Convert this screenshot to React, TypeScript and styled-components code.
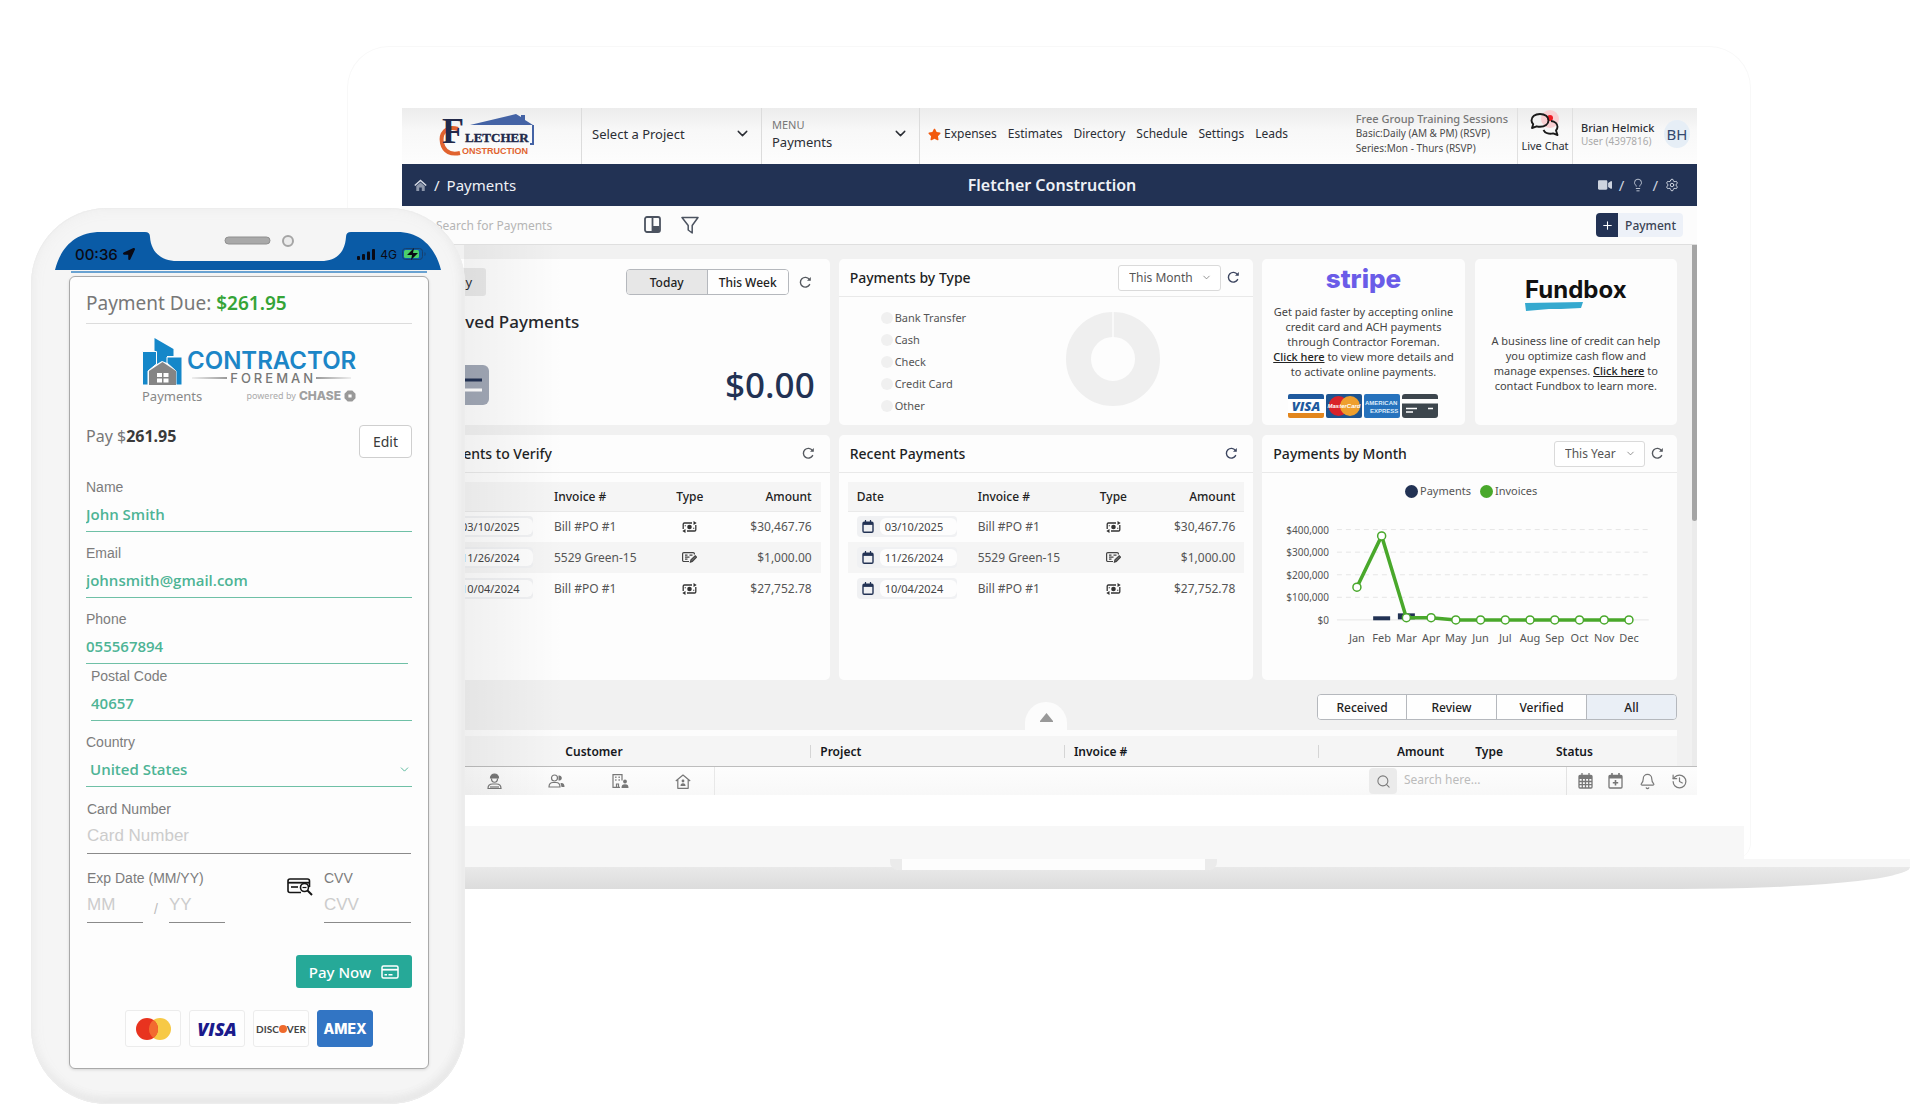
import React from 'react';
import styled, { createGlobalStyle, css } from 'styled-components';
import { ChevronDown, Plus, Search, Bell, History, Settings, Lightbulb } from 'lucide-react';
import { FaLocationArrow, FaStar, FaVideo } from 'react-icons/fa';

const sans = `'Noto Sans', 'Open Sans', sans-serif`;
const arial = `'Liberation Sans', Arial, sans-serif`;
const navy = '#223254';
const ink = '#2b2e35';
const green = '#4db495';

const GlobalStyle = createGlobalStyle`
  *, *::before, *::after { box-sizing: border-box; }
  body { margin: 0; background: #fff; font-family: ${sans}; font-size: 12px; color: ${ink}; overflow-x: hidden; }
  button, input, select { font: inherit; color: inherit; margin: 0; }
  button { cursor: pointer; }
  svg { display: block; flex: none; }
  p, h1, h2, h3 { margin: 0; font-weight: inherit; font-size: inherit; }
  a { color: inherit; text-decoration: none; }
`;

/* ---------- stage and devices ---------- */

const Stage = styled.main`
  display: grid;
  grid-template-columns: 31px 434px minmax(0, 1fr) 10px;
  align-items: start;
`;

const Laptop = styled.section`
  grid-column: 1 / 4;
  grid-row: 1;
  padding: 46px 0 0 347px;
`;

const Lid = styled.div`
  margin-right: 159px;
  padding-top: 61px;
  border: 1px solid #f8f8f8;
  border-bottom: 0;
  border-radius: 42px 42px 16px 16px;
`;

const Screen = styled.div`
  position: relative;
  margin: 0 53px 31px 54px;
  background: #fcfcfc;
  &::after {
    content: '';
    position: absolute;
    inset: 137px auto 0 62px;
    width: 100px;
    pointer-events: none;
    background: linear-gradient(90deg, rgba(0, 0, 0, 0.05), rgba(0, 0, 0, 0));
  }
`;

const Chin = styled.div`
  height: 33px;
  margin-right: 6px;
  background: #f7f7f7;
`;

const Base = styled.div`
  height: 30px;
  padding-left: 543px;
  border-radius: 0 0 230px 30px / 0 0 22px 22px;
  background: linear-gradient(#f7f7f7 0 8px, #e9e9e9 8px, #dcdcdc 100%);
`;

const Notch = styled.div`
  width: 327px;
  height: 11px;
  border-radius: 0 0 8px 8px;
  border: solid #ebebeb;
  border-width: 0 12px;
  background: #fdfdfd;
`;

const Phone = styled.section`
  grid-column: 2;
  grid-row: 1;
  z-index: 1;
  margin-top: 208px;
  padding: 24px 24px 35px;
  border-radius: 76px;
  background: #f5f5f5;
  box-shadow: inset 0 0 0 1px #ededed, inset 0 0 14px 2px #efefef, inset -2px -5px 8px #dedede;
`;

/* ---------- top of the desktop app ---------- */

const TopBar = styled.header`
  display: flex;
  height: 56px;
  background: linear-gradient(#ececec, #f8f8f8 40%, #fdfdfd);
`;

const LogoCell = styled.div`
  flex: 0 0 179px;
  display: flex;
  align-items: center;
  padding: 0 0 2px 36px;
`;

const PickCell = styled.button<{ $w: number }>`
  flex: 0 0 ${(p) => p.$w}px;
  display: flex;
  align-items: center;
  justify-content: space-between;
  padding: 0 10px 5px;
  border: 0;
  border-left: 1px solid #dcdcdc;
  background: none;
  text-align: left;
  font-size: 13px;
  line-height: 18px;
`;

const Overline = styled.small`
  display: block;
  font-size: 11px;
  line-height: 16px;
  color: #777;
`;

const Nav = styled.nav`
  flex: 1;
  display: flex;
  align-items: center;
  gap: 11px;
  padding: 0 0 4px 8px;
  border-left: 1px solid #dcdcdc;
  line-height: 18px;
`;

const Starred = styled.span`
  display: flex;
  align-items: center;
  gap: 3px;
`;

const Training = styled.div`
  padding: 3px 9px 0 0;
  font-size: 10px;
  line-height: 15px;
  color: #4a4a4a;
  b { display: block; font-size: 11px; font-weight: 500; color: #777; }
`;

const ChatCell = styled.button`
  flex: 0 0 56px;
  display: flex;
  flex-direction: column;
  align-items: center;
  justify-content: flex-start;
  padding: 2px 0 0;
  border: solid #e0e0e0;
  border-width: 0 1px;
  background: none;
  font-size: 11px;
  line-height: 13px;
  white-space: nowrap;
`;

const UserCell = styled.div`
  flex: 0 0 124px;
  display: flex;
  align-items: center;
  justify-content: space-between;
  padding: 0 7px 4px 8px;
  font-size: 11px;
  line-height: 14px;
  font-weight: 500;
  white-space: nowrap;
  small { display: block; font-size: 10px; line-height: 13px; font-weight: 400; color: #aaa; }
`;

const Avatar = styled.span`
  display: grid;
  place-items: center;
  width: 26px;
  height: 28px;
  border-radius: 50%;
  background: #e6eef6;
  color: #34486e;
  font-size: 15px;
  font-weight: 400;
`;

const TitleBar = styled.div`
  display: grid;
  grid-template-columns: 1fr auto 1fr;
  align-items: center;
  height: 42px;
  padding: 0 7px 0 12px;
  background: ${navy};
  color: #eef1f6;
  font-size: 15px;
  h1 { font-size: 16px; font-weight: 600; }
`;

const Crumbs = styled.div`
  display: flex;
  align-items: center;
  gap: 7px;
`;

const TitleTools = styled.div`
  display: flex;
  justify-content: flex-end;
  align-items: center;
  gap: 7px;
  padding-right: 11px;
  color: #cdd3df;
`;

const Toolbar = styled.div`
  display: flex;
  align-items: center;
  height: 39px;
  padding: 0 14px 0 34px;
  border-bottom: 1px solid #dfdfdf;
  background: #fcfcfc;
  color: #4c5360;
`;

const ToolSearch = styled.input`
  width: 208px;
  padding: 0;
  border: 0;
  outline: 0;
  background: none;
  font-size: 12px;
  &::placeholder { color: #b5b5b5; opacity: 1; }
`;

const ToolIcons = styled.div`
  display: flex;
  flex: 1;
  gap: 20px;
`;

const AddButton = styled.button`
  display: flex;
  align-items: center;
  height: 24px;
  padding: 0 7px 0 0;
  gap: 7px;
  border: 0;
  border-radius: 4px;
  overflow: hidden;
  background: #edf1f8;
  color: #3a4254;
  font-weight: 500;
  font-size: 12px;
`;

const AddMark = styled.span`
  display: grid;
  place-items: center;
  width: 22px;
  height: 24px;
  background: ${navy};
  color: #fff;
`;

/* ---------- dashboard ---------- */

const Scroller = styled.div`
  display: flex;
  justify-content: space-between;
  background: #f1f1f1;
`;

const Dashboard = styled.div`
  flex: 1;
  min-width: 0;
  padding: 14px 15px 0 13px;
`;

const ScrollTrack = styled.div`
  width: 5px;
  background: #ebebeb;
`;

const ScrollThumb = styled.div`
  height: 276px;
  border-radius: 0 0 3px 3px;
  background: #a5a5a5;
`;

const Cards = styled.div`
  display: grid;
  grid-template-columns: repeat(3, minmax(0, 1fr));
  grid-template-rows: 166px 245px;
  gap: 10px 9px;
`;

const Card = styled.article`
  border-radius: 5px;
  background: #fdfdfd;
`;

const CardHead = styled.header<{ $right?: number }>`
  display: flex;
  align-items: center;
  gap: 6px;
  height: 38px;
  padding: 0 ${(p) => p.$right ?? 13}px 0 11px;
  border-bottom: 1px solid #e9e9e9;
  h2 { flex: 1; font-size: 14px; font-weight: 500; color: #1d1f24; white-space: nowrap; }
`;

const PickWrap = styled.label`
  display: grid;
  align-items: center;
  svg { grid-area: 1 / 1; justify-self: end; margin-right: 9px; pointer-events: none; color: #777; }
`;

const Pick = styled.select<{ $w: number }>`
  grid-area: 1 / 1;
  width: ${(p) => p.$w}px;
  height: 26px;
  padding: 0 10px;
  appearance: none;
  border: 1px solid #dadada;
  border-radius: 3px;
  background: #fff;
  color: #555;
  font-size: 12px;
`;

const IconButton = styled.button`
  display: grid;
  place-items: center;
  padding: 0;
  border: 0;
  background: none;
`;

const Received = styled(Card)`
  display: flex;
  flex-direction: column;
  padding: 9px 15px 0 7px;
  h2 { margin-top: 14px; font-size: 17px; line-height: 24px; font-weight: 500; color: #25272c; }
`;

const Spread = styled.div`
  display: flex;
  align-items: center;
  justify-content: space-between;
`;

const RangeRow = styled.div`
  display: flex;
  align-items: center;
  gap: 10px;
  padding-right: 3px;
`;

const Tag = styled.span`
  padding: 0 14px;
  border-radius: 3px;
  background: #e9e9e9;
  font-size: 13px;
  line-height: 28px;
`;

const Segments = styled.div`
  display: flex;
  border: 1px solid #b5b8bd;
  border-radius: 4px;
  overflow: hidden;
`;

const Segment = styled.button<{ $w: number; $on?: string }>`
  width: ${(p) => p.$w}px;
  height: 24px;
  padding: 0;
  border: 0;
  background: ${(p) => p.$on || '#fefefe'};
  font-size: 12px;
  font-weight: 500;
  color: #222;
  & + & { border-left: 1px solid #b5b8bd; }
`;

const Total = styled.div`
  font-size: 35px;
  line-height: 48px;
  font-weight: 500;
  color: ${navy};
`;

const TotalRow = styled(Spread)`
  margin-top: 27px;
  padding-left: 24px;
`;

const TypeBody = styled.div`
  display: flex;
  align-items: flex-start;
  justify-content: space-between;
  padding: 10px 92px 0 42px;
  svg { margin-top: 4px; }
`;

const TypeList = styled.ul`
  margin: 0;
  padding: 0;
  list-style: none;
  font-size: 11px;
  line-height: 22px;
  color: #555;
`;

const TypeItem = styled.li`
  display: flex;
  align-items: center;
  gap: 2px;
  &::before { content: ''; width: 12px; height: 12px; border-radius: 50%; background: #f0f0f0; }
`;

const Pair = styled.div`
  display: grid;
  grid-template-columns: 1fr 1fr;
  gap: 10px;
`;

const Partner = styled(Card)<{ $top: number }>`
  display: flex;
  flex-direction: column;
  align-items: center;
  padding: ${(p) => p.$top}px 4px 0;
  text-align: center;
  font-size: 11px;
  line-height: 15px;
  color: #444;
  p { white-space: nowrap; }
  a { font-weight: 500; text-decoration: underline; color: #222; }
`;

const StripeMark = styled.div`
  margin-bottom: 9px;
  font-family: Inter, sans-serif;
  font-weight: 800;
  font-size: 26px;
  line-height: 32px;
  color: #6a5ce8;
`;

const FundMark = styled.div`
  margin-bottom: 22px;
  font-family: Inter, sans-serif;
  font-weight: 700;
  font-size: 24px;
  line-height: 24px;
  color: #111;
`;

const Brands = styled.div`
  display: flex;
  gap: 2px;
  margin-top: 15px;
`;

const MiniTable = styled.table`
  width: calc(100% - 18px);
  margin: 9px 9px 0;
  border-collapse: collapse;
  table-layout: fixed;
  th, td { padding: 0 9px; text-align: left; }
  th { height: 29px; background: #f5f5f5; border-bottom: 1px solid #eaeaea; font-weight: 500; color: #222; }
  td { height: 31px; color: #555; }
  tbody tr:nth-child(2) { background: #f5f5f5; }
  th:nth-child(1) { width: 30.5%; }
  th:nth-child(2) { width: 26.5%; }
  th:nth-child(3) { width: 20%; text-align: center; }
  th:nth-child(4), td:nth-child(4) { text-align: right; }
  td:nth-child(3) svg { margin: 0 auto; }
`;

const DateChip = styled.span`
  display: flex;
  align-items: center;
  gap: 6px;
  width: 100px;
  height: 21px;
  padding-left: 5px;
  border-radius: 4px;
  background: #f0f1f3;
  font-size: 11px;
  color: #444;
  time { flex: 1; padding-left: 5px; line-height: 17px; border-radius: 6px; background: #fdfdfd; }
`;

const Legend = styled.div`
  display: flex;
  justify-content: center;
  gap: 9px;
  padding: 9px 0 0 3px;
  font-size: 11px;
  line-height: 18px;
  color: #555;
`;

const Key = styled.span<{ $c: string }>`
  display: flex;
  align-items: center;
  gap: 2px;
  &::before { content: ''; width: 13px; height: 13px; border-radius: 50%; background: ${(p) => p.$c}; }
`;

/* ---------- list under the dashboard ---------- */

const ListTools = styled.div`
  display: grid;
  grid-template-columns: 1fr auto 1fr;
  align-items: end;
  height: 50px;
  ${Segments} { grid-column: 3; justify-self: end; align-self: center; margin-top: 4px; }
`;

const Collapse = styled.button`
  grid-column: 2;
  display: grid;
  place-items: center;
  width: 42px;
  height: 28px;
  padding: 2px 0 0;
  border: 0;
  border-radius: 21px 21px 0 0;
  background: #fcfcfc;
`;

const ListTable = styled.table`
  width: 100%;
  border-top: 6px solid #fcfcfc;
  border-collapse: collapse;
  table-layout: fixed;
  background: #f5f5f5;
  th { height: 33px; padding: 0 9px; font-size: 12px; font-weight: 600; color: #16181c; }
`;

const Th = styled.th<{ $w: number; $line?: boolean; $end?: boolean }>`
  width: ${(p) => p.$w}%;
  text-align: left;
  ${(p) => p.$line && css`background: linear-gradient(#d5d5d5, #d5d5d5) right center / 1px 13px no-repeat;`}
  ${(p) => p.$end && css`&& { text-align: right; padding-right: 22px; }`}
`;

const Dock = styled.footer`
  display: flex;
  height: 29px;
  border-top: 1px solid #bdbdbd;
  background: linear-gradient(#fdfdfd, #f8f8f8);
  color: #7a7a7a;
`;

const DockLeft = styled.div`
  display: flex;
  align-items: center;
  justify-content: space-between;
  width: 313px;
  padding: 0 23px 0 85px;
  border-right: 1px solid #e8e8e8;
`;

const DockSearch = styled.label`
  display: flex;
  align-items: center;
  width: 197px;
  margin-left: auto;
  input { width: 150px; padding: 0 0 3px 7px; border: 0; outline: 0; background: none; font-size: 12px; }
  input::placeholder { color: #bbb; opacity: 1; }
`;

const DockMark = styled.span`
  display: grid;
  place-items: center;
  width: 28px;
  height: 26px;
  border-radius: 4px;
  background: #ebebeb;
`;

const DockRight = styled.div`
  display: flex;
  align-items: center;
  justify-content: space-between;
  width: 131px;
  padding: 0 9px 0 11px;
  border-left: 1px solid #e3e3e3;
`;

/* ---------- phone ---------- */

const StatusBar = styled.div`
  position: relative;
  display: flex;
  align-items: center;
  height: 38px;
  padding: 6px 14px 0 20px;
  font-family: Inter, sans-serif;
  font-size: 15px;
  font-weight: 500;
  color: #0a0a14;
`;

const StatusShape = styled.svg`
  position: absolute;
  inset: 0;
  width: 100%;
  height: 100%;
  overflow: visible;
`;

const StatusSide = styled.div`
  position: relative;
  display: flex;
  align-items: center;
  gap: 5px;
  small { font-size: 12px; font-weight: 400; }
  &:last-child { margin-left: auto; }
`;

const Sheet = styled.form`
  margin: 6px 12px 0 14px;
  padding: 0 16px 21px;
  border: 1px solid #a9a9a9;
  border-radius: 6px;
  background: #fdfdfd;
  box-shadow: 0 1px 3px rgba(0, 0, 0, 0.12);
`;

const Due = styled.h2`
  height: 47px;
  padding-top: 12px;
  border-bottom: 1px solid #dcdcdc;
  && { font-size: 19px; }
  line-height: 28px;
  color: #777;
  b { font-weight: 600; color: #35a437; }
`;

const BrandBox = styled.div`
  width: 214px;
  margin: 13px auto 0;
`;

const BrandTop = styled.div`
  display: flex;
  align-items: flex-end;
  gap: 4px;
`;

const BrandWord = styled.div`
  font-family: Inter, sans-serif;
  font-weight: 600;
  font-size: 24px;
  line-height: 22px;
  color: #1c86c7;
`;

const BrandSub = styled.div`
  display: flex;
  align-items: center;
  gap: 3px;
  margin-bottom: 2px;
  padding: 0 5px;
  font-family: Inter, sans-serif;
  font-size: 13px;
  line-height: 12px;
  font-weight: 500;
  color: #777;
  &::before, &::after { content: ''; flex: 1; height: 2px; background: linear-gradient(90deg, #eee, #999); }
  &::after { background: linear-gradient(90deg, #999, #eee); }
`;

const BrandFoot = styled(Spread)`
  height: 19px;
  font-size: 13px;
  color: #888;
`;

const Powered = styled.span`
  display: flex;
  align-items: center;
  gap: 3px;
  font-size: 9px;
  color: #aaa;
  b { font-family: Inter, sans-serif; font-weight: 800; font-size: 12px; color: #a0a0a0; }
`;

const PayRow = styled(Spread)`
  margin: 20px 0 20px;
  align-items: flex-start;
  font-size: 16px;
  line-height: 22px;
  color: #777;
  b { font-weight: 700; color: #3a3a3a; }
`;

const EditButton = styled.button`
  width: 53px;
  height: 33px;
  padding: 0;
  border: 1px solid #cfcfcf;
  border-radius: 4px;
  background: #fff;
  font-size: 14px;
  color: #3a3a3a;
`;

const Field = styled.div<{ $gap: number; $pad?: string }>`
  display: grid;
  margin-bottom: ${(p) => p.$gap}px;
  padding: ${(p) => p.$pad || '0'};
`;

const labelText = css`
  font-family: ${arial};
  font-size: 14px;
  line-height: 18px;
  color: #7c7c7c;
`;

const Label = styled.label`${labelText}`;

const control = css`
  width: 100%;
  height: 36px;
  padding: 1px 0 0;
  border: 0;
  border-bottom: 1px solid #6fc0a6;
  border-radius: 0;
  outline: 0;
  background: none;
  font-family: 'Open Sans', 'Noto Sans', sans-serif;
  font-size: 15px;
  font-weight: 600;
  color: ${green};
`;

const TextBox = styled.input`${control}`;

const CountryWrap = styled.div`
  display: grid;
  align-items: center;
  svg { grid-area: 1 / 1; justify-self: end; margin-right: 1px; color: ${green}; pointer-events: none; }
`;

const CountryBox = styled.select`
  ${control}
  grid-area: 1 / 1;
  padding-left: 4px;
  appearance: none;
`;

const CardBox = styled.input`
  ${control}
  border-bottom-color: #8a8a8a;
  font-family: ${arial};
  font-size: 17px;
  font-weight: 400;
  color: #555;
  &::placeholder { color: #ccc; opacity: 1; }
`;

const ExpRow = styled.div`
  display: flex;
  align-items: flex-start;
  gap: 11px;
  padding: 0 1px;
`;

const Expiry = styled.fieldset`
  flex: 1;
  min-width: 0;
  margin: 0;
  padding: 0;
  border: 0;
  legend { padding: 0; ${labelText} }
`;

const ExpParts = styled.div`
  display: grid;
  grid-template-columns: 56px 26px 56px;
  align-items: center;
  text-align: center;
  color: #bbb;
  font-family: ${arial};
  font-size: 14px;
  span { padding-top: 8px; }
`;

const CvvField = styled.div`
  display: grid;
  width: 87px;
`;

const ScanButton = styled(IconButton)`
  margin-top: 9px;
`;

const PayButton = styled.button`
  display: flex;
  align-items: center;
  gap: 10px;
  height: 33px;
  margin: 32px 0 22px auto;
  padding: 0 13px;
  border: 0;
  border-radius: 3px;
  background: #26a998;
  color: #fff;
  font-size: 15px;
  font-weight: 500;
`;

const Accepted = styled.div`
  display: flex;
  justify-content: center;
  gap: 8px;
`;

const Badge = styled.span<{ $bg?: string; $c?: string }>`
  display: flex;
  align-items: center;
  justify-content: center;
  width: 56px;
  height: 37px;
  border: 1px solid ${(p) => p.$bg || '#ececec'};
  border-radius: 3px;
  background: ${(p) => p.$bg || '#fefefe'};
  color: ${(p) => p.$c || '#444'};
  font-family: Inter, sans-serif;
`;

const VisaText = styled.b`
  font-family: 'Open Sans', sans-serif;
  font-size: 18px;
  font-weight: 800;
  font-style: italic;
`;

const DiscoverText = styled.b`
  display: flex;
  align-items: center;
  font-family: Lato, sans-serif;
  font-size: 10px;
  font-weight: 700;
  i { width: 8px; height: 8px; border-radius: 50%; background: #ef6a2c; }
`;

const AmexText = styled.b`
  font-size: 14px;
  font-weight: 800;
`;

/* ---------- drawings ---------- */

const Refresh = ({ color = '#55595f' }: { color?: string }) => (
  <svg width="13" height="13" viewBox="0 0 13 13" fill="none" stroke={color} strokeWidth="1.4" strokeLinecap="round">
    <path d="M10.6 8.6A4.9 4.9 0 1 1 10.3 3.4" />
    <path d="M11.8 1v3.8H8z" fill={color} stroke="none" />
  </svg>
);

const CashIcon = () => (
  <svg width="15" height="12" viewBox="0 0 15 12" fill="none" stroke="#333" strokeWidth="1.3">
    <path d="M1.2 8V3.2A1.2 1.2 0 0 1 2.4 2H10M13.8 4v4.8a1.2 1.2 0 0 1-1.2 1.2H5" />
    <path d="M11.5 0l3.2 2-3.2 2zM3.5 8L.3 10l3.2 2z" fill="#333" stroke="none" />
    <circle cx="7.5" cy="6" r="2.3" fill="#333" stroke="none" />
    <path d="M3.3 4.2v1M11.7 6.8v1" strokeWidth="1.2" />
  </svg>
);

const CheckIcon = () => (
  <svg width="15" height="11" viewBox="0 0 15 11" fill="none" stroke="#444" strokeWidth="1.2">
    <path d="M7 9.5H1.8A1.2 1.2 0 0 1 .6 8.3V1.8A1.2 1.2 0 0 1 1.8 .6h9.4A1.2 1.2 0 0 1 12.4 1.8V2.5" />
    <path d="M3 3.2h2.5M7.5 3.2h3M3 5.2h4.5M3 7.2h2.5" />
    <path d="M8.5 10l.5-2.2 4.2-4 1.3 1.4-4.2 4.2z" fill="#777" />
  </svg>
);

const CalendarIcon = () => (
  <svg width="12" height="13" viewBox="0 0 12 13" fill="none" stroke={navy} strokeWidth="1.4">
    <rect x="1" y="2.2" width="10" height="10" rx="1.2" />
    <path d="M1 3.7h10" strokeWidth="2.4" />
    <path d="M3.5 0v3M8.5 0v3" strokeWidth="1.2" />
  </svg>
);

const FletcherLogo = () => (
  <svg width="100" height="44" viewBox="0 0 100 44">
    <path d="M32 12L78 1l5 3V2h4v5l8 5z" fill="#4463a5" />
    <path d="M95 12v19h-3" fill="none" stroke="#4463a5" strokeWidth="2" />
    <path d="M20 16C8 12 2 21 4 30c2 9 9 12 18 10" fill="none" stroke="#e1632f" strokeWidth="4" />
    <text x="4" y="30" fontFamily="'Liberation Serif', serif" fontWeight="700" fontSize="36" fill="#22294a">F</text>
    <text x="27" y="29" fontFamily="'Liberation Serif', serif" fontWeight="700" fontSize="13" fill="#22294a" stroke="#22294a" strokeWidth=".4">LETCHER</text>
    <text x="24" y="41" fontFamily="'Liberation Sans', sans-serif" fontWeight="700" fontSize="9" fill="#e1632f">ONSTRUCTION</text>
  </svg>
);

const ChatIcon = () => (
  <svg width="36" height="29" viewBox="0 0 36 29" fill="none" stroke="#1a1a1a" strokeWidth="1.9" strokeLinejoin="round">
    <circle cx="23" cy="9" r="9" fill="#f9cfd2" stroke="none" />
    <circle cx="23" cy="8" r="3" fill="#ee1c25" stroke="none" />
    <path d="M13 4c5 0 8.5 2.8 8.5 6.4s-3.5 6.4-8.5 6.4c-1.2 0-2.3-.2-3.3-.5L5 18l1.2-3.8A6 6 0 0 1 4.5 10.4C4.5 6.8 8 4 13 4z" />
    <path d="M24 11c4 .4 6.5 3 6.5 5.8 0 1.5-.6 2.7-1.5 3.7L30.5 25l-4.3-1.6c-4.5 1-8.4-.6-9.7-3.4" />
  </svg>
);

const StripeCards = () => (
  <>
    <svg width="36" height="24" viewBox="0 0 36 24">
      <rect width="36" height="24" rx="2" fill="#fff" />
      <path d="M0 5V2a2 2 0 0 1 2-2h32a2 2 0 0 1 2 2v3z" fill="#1f5a9e" />
      <path d="M0 19h36v3a2 2 0 0 1-2 2H2a2 2 0 0 1-2-2z" fill="#e2861d" />
      <text x="18" y="17" textAnchor="middle" fontFamily="'Open Sans', sans-serif" fontWeight="800" fontStyle="italic" fontSize="13" fill="#1f5a9e">VISA</text>
    </svg>
    <svg width="36" height="24" viewBox="0 0 36 24">
      <rect width="36" height="24" rx="2" fill="#1d5490" />
      <circle cx="12.5" cy="12" r="10" fill="#d9222a" />
      <circle cx="24" cy="12" r="10" fill="#ee9f2d" />
      <text x="18" y="14" textAnchor="middle" fontFamily="'Liberation Sans', sans-serif" fontWeight="700" fontStyle="italic" fontSize="6" fill="#fff">MasterCard</text>
    </svg>
    <svg width="36" height="24" viewBox="0 0 36 24">
      <rect width="36" height="24" rx="2" fill="#2672bd" />
      <text x="1" y="11" fontFamily="'Liberation Sans', sans-serif" fontWeight="700" fontSize="6" fill="#dcebfa">AMERICAN</text>
      <text x="6" y="19" fontFamily="'Liberation Sans', sans-serif" fontWeight="700" fontSize="6" fill="#dcebfa">EXPRESS</text>
    </svg>
    <svg width="36" height="24" viewBox="0 0 36 24">
      <rect width="36" height="24" rx="3" fill="#3d464d" />
      <path d="M0 5h36v4.5H0z" fill="#fdfdfd" />
      <path d="M4 14.5h11M4 18h7M26 14.5h5" stroke="#fff" strokeWidth="1.6" />
    </svg>
  </>
);

const months = ['Jan', 'Feb', 'Mar', 'Apr', 'May', 'Jun', 'Jul', 'Aug', 'Sep', 'Oct', 'Nov', 'Dec'];
const invoices = [145, 372, 10, 10, 0, 0, 0, 0, 0, 0, 0, 0];
const paid = [0, 16, 29, 0, 0, 0, 0, 0, 0, 0, 0, 0];

const MonthChart = () => {
  const x = (i: number) => 95 + i * 24.75;
  const y = (v: number) => 120 - v * 0.226;
  return (
    <svg width="100%" height="150" viewBox="0 0 415 150" preserveAspectRatio="xMidYMin meet" fontFamily={sans} fill="#555">
      {[400, 300, 200, 100, 0].map((v) => (
        <g key={v}>
          <path d={`M75 ${y(v)}H387`} stroke="#e6e6e6" strokeDasharray={v ? '5 4' : undefined} />
          <text x="67" y={y(v) + 4} textAnchor="end" fontSize="10">{v ? `$${v},000` : '$0'}</text>
        </g>
      ))}
      {paid.map((v, i) => v > 0 && <rect key={i} x={x(i) - 8.5} y={y(v)} width="17" height={i === 1 ? 4 : 6} fill={navy} />)}
      <polyline points={invoices.map((v, i) => `${x(i)},${y(v)}`).join(' ')} fill="none" stroke="#49a82b" strokeWidth="3.5" />
      {invoices.map((v, i) => <circle key={i} cx={x(i)} cy={y(v)} r="4" fill="#fff" stroke="#49a82b" strokeWidth="1.5" />)}
      {months.map((m, i) => <text key={m} x={x(i)} y="142" textAnchor="middle" fontSize="11">{m}</text>)}
    </svg>
  );
};

const WorkerIcon = () => (
  <svg width="15" height="17" viewBox="0 0 15 17" fill="none" stroke="#777" strokeWidth="1.2">
    <path d="M3.5 5a4 4 0 0 1 8 0z" fill="#777" />
    <path d="M4.5 5.5c0 5 6 5 6 0M1 15.5c0-3.5 2.5-4.5 4.5-4.5h4c2 0 4.5 1 4.5 4.5z" />
    <path d="M3 14h9" />
  </svg>
);

const PeopleIcon = () => (
  <svg width="17" height="14" viewBox="0 0 17 14" fill="none" stroke="#777" strokeWidth="1.2">
    <circle cx="6.5" cy="4" r="3" />
    <path d="M1 13c0-3 1.5-4.5 4-4.5h3c2.5 0 4 1.5 4 4.5z" />
    <path d="M10.5 1.5a2.6 2.6 0 1 1 0 5M12.5 9h1c2 0 3 1.5 3 4h-3z" fill="#777" stroke="none" />
  </svg>
);

const BuildingIcon = () => (
  <svg width="17" height="14" viewBox="0 0 17 14" fill="none" stroke="#777" strokeWidth="1.2">
    <path d="M8 13.4H1V.6h9v6M4.5 13v-3h2v3" />
    <path d="M3.2 3.2h1.3M6.5 3.2h1.3M3.2 6h1.3M6.5 6h1.3" strokeWidth="1.5" />
    <circle cx="13" cy="7.5" r="1.9" fill="#777" stroke="none" />
    <path d="M9.5 13.9c0-2.6 1-3.7 3.5-3.7s3.5 1.1 3.5 3.7z" fill="#777" stroke="none" />
  </svg>
);

const HomeUserIcon = () => (
  <svg width="16" height="15" viewBox="0 0 16 15" fill="none" stroke="#777" strokeWidth="1.2" strokeLinejoin="round">
    <path d="M.8 7L8 1l7.2 6M2.8 5.5v8.8h10.4V5.5" />
    <circle cx="8" cy="7" r="1.4" fill="#777" stroke="none" />
    <path d="M5.5 12c0-2 .8-2.8 2.5-2.8s2.5.8 2.5 2.8z" fill="#777" stroke="none" />
  </svg>
);

const GridCalendarIcon = () => (
  <svg width="15" height="16" viewBox="0 0 15 16" fill="none" stroke="#777" strokeWidth="1.3">
    <rect x="1" y="2.5" width="13" height="12.5" rx="1" />
    <path d="M1 4.5h13" strokeWidth="3" />
    <path d="M4 0v4M11 0v4M1 8.5h13M1 11.7h13M4.3 5v10M7.5 5v10M10.7 5v10" />
  </svg>
);

const AddCalendarIcon = () => (
  <svg width="15" height="16" viewBox="0 0 15 16" fill="none" stroke="#777" strokeWidth="1.3">
    <rect x="1" y="2.5" width="13" height="12.5" rx="1" />
    <path d="M1 4h13" strokeWidth="3" />
    <path d="M4 0v4M11 0v4M7.5 7v5.5M4.8 9.8h5.4" strokeWidth="1.6" />
  </svg>
);

const BuildingMark = () => (
  <svg width="41" height="49" viewBox="0 0 41 49">
    <path d="M12.5 13V1l19 11v7H25v7l-5-2-5 3z" fill="#1587c9" />
    <path d="M.5 14.5h14V27L6 34v14H.5zM25 20h15v28h-6V34l-9-8z" fill="#1587c9" stroke="#fdfdfd" />
    <path d="M7 48V34l13.5-9L34 34v14z" fill="#858585" />
    <path d="M15 36h5v4h-5zM21.5 36h5v4h-5zM15 41.5h5v4h-5zM21.5 41.5h5v4h-5z" fill="#fff" />
  </svg>
);

const ChaseMark = () => (
  <svg width="12" height="12" viewBox="0 0 12 12">
    <path d="M3.7.5h4.6l3.2 3.2v4.6l-3.2 3.2H3.7L.5 8.3V3.7zM4.4 4.4v3.2h3.2V4.4z" fill="#999" fillRule="evenodd" />
  </svg>
);

/* ---------- data and sections ---------- */

const payments = [
  { date: '03/10/2025', invoice: 'Bill #PO #1', kind: 'cash', amount: '$30,467.76' },
  { date: '11/26/2024', invoice: '5529 Green-15', kind: 'check', amount: '$1,000.00' },
  { date: '10/04/2024', invoice: 'Bill #PO #1', kind: 'cash', amount: '$27,752.78' },
];

const PaymentTable = () => (
  <MiniTable>
    <thead>
      <tr><th>Date</th><th>Invoice #</th><th>Type</th><th>Amount</th></tr>
    </thead>
    <tbody>
      {payments.map((p) => (
        <tr key={p.date}>
          <td><DateChip><CalendarIcon /><time>{p.date}</time></DateChip></td>
          <td>{p.invoice}</td>
          <td>{p.kind === 'cash' ? <CashIcon /> : <CheckIcon />}</td>
          <td>{p.amount}</td>
        </tr>
      ))}
    </tbody>
  </MiniTable>
);

const RefreshButton = ({ color }: { color?: string }) => (
  <IconButton type="button" aria-label="Refresh"><Refresh color={color} /></IconButton>
);

const DesktopHeader = () => (
  <>
    <TopBar>
      <LogoCell><FletcherLogo /></LogoCell>
      <PickCell type="button" $w={180}>Select a Project<ChevronDown size={17} strokeWidth={2} /></PickCell>
      <PickCell type="button" $w={158}><span><Overline>MENU</Overline>Payments</span><ChevronDown size={17} strokeWidth={2} /></PickCell>
      <Nav>
        <Starred><FaStar size={13} color="#f2590d" /><a href="#expenses">Expenses</a></Starred>
        <a href="#estimates">Estimates</a>
        <a href="#directory">Directory</a>
        <a href="#schedule">Schedule</a>
        <a href="#settings">Settings</a>
        <a href="#leads">Leads</a>
      </Nav>
      <Training><b>Free Group Training Sessions</b>Basic:Daily (AM &amp; PM) (RSVP)<br />Series:Mon - Thurs (RSVP)</Training>
      <ChatCell type="button"><ChatIcon />Live Chat</ChatCell>
      <UserCell><span>Brian Helmick<small>User (4397816)</small></span><Avatar>BH</Avatar></UserCell>
    </TopBar>
    <TitleBar>
      <Crumbs>
        <svg width="13" height="12" viewBox="0 0 13 12">
          <path d="M.8 6.5l5.7-5 5.7 5" fill="none" stroke="#d5dae5" strokeWidth="1.6" />
          <path d="M2.3 7L6.5 3.4 10.7 7v5H7.8V8.5H5.2V12H2.3z" fill="#8d97ab" />
        </svg>
        <span>/</span><span>Payments</span>
      </Crumbs>
      <h1>Fletcher Construction</h1>
      <TitleTools><FaVideo size={14} /><span>/</span><Lightbulb size={14} strokeWidth={1.5} /><span>/</span><Settings size={14} strokeWidth={1.7} /></TitleTools>
    </TitleBar>
    <Toolbar>
      <ToolSearch aria-label="Search for Payments" placeholder="Search for Payments" />
      <ToolIcons>
        <svg width="17" height="17" viewBox="0 0 17 17" fill="none" stroke="#4c5360" strokeWidth="1.8">
          <rect x="1" y="1" width="15" height="15" rx="2" />
          <path d="M8.5 1v15" />
          <path d="M8.5 10h7v6h-7z" fill="#4c5360" stroke="none" />
        </svg>
        <svg width="18" height="18" viewBox="0 0 18 18" fill="none" stroke="#4c5360" strokeWidth="1.5" strokeLinejoin="round">
          <path d="M1 1.5h16l-5.8 8V17l-4-3V9.5z" />
        </svg>
      </ToolIcons>
      <AddButton type="button"><AddMark><Plus size={13} strokeWidth={2} /></AddMark>Payment</AddButton>
    </Toolbar>
  </>
);

const DashboardCards = () => (
  <Cards>
    <Received>
      <Spread>
        <Tag>Today</Tag>
        <RangeRow>
          <Segments><Segment type="button" $w={80} $on="#e7e7e7">Today</Segment><Segment type="button" $w={81}>This Week</Segment></Segments>
          <RefreshButton />
        </RangeRow>
      </Spread>
      <h2>Received Payments</h2>
      <TotalRow>
        <svg width="43" height="40" viewBox="0 0 43 40">
          <rect width="43" height="40" rx="6" fill="#a1a8b6" />
          <path d="M8 15h28" stroke={navy} strokeWidth="3" />
          <path d="M8 25h28" stroke="#fff" strokeWidth="3" />
        </svg>
        <Total>$0.00</Total>
      </TotalRow>
    </Received>
    <Card>
      <CardHead>
        <h2>Payments by Type</h2>
        <PickWrap><Pick $w={103} aria-label="Type period" defaultValue="m"><option value="m">This Month</option></Pick><ChevronDown size={11} strokeWidth={1.7} /></PickWrap>
        <RefreshButton color="#3d4660" />
      </CardHead>
      <TypeBody>
        <TypeList>
          {['Bank Transfer', 'Cash', 'Check', 'Credit Card', 'Other'].map((t) => <TypeItem key={t}>{t}</TypeItem>)}
        </TypeList>
        <svg width="96" height="96" viewBox="0 0 96 96">
          <circle cx="48" cy="48" r="34.5" fill="none" stroke="#efefef" strokeWidth="25" />
          <path d="M48 0v27" stroke="#fdfdfd" strokeWidth="1.5" />
        </svg>
      </TypeBody>
    </Card>
    <Pair>
      <Partner $top={4}>
        <StripeMark>stripe</StripeMark>
        <p>Get paid faster by accepting online<br />credit card and ACH payments<br />through Contractor Foreman.<br /><a href="#stripe">Click here</a> to view more details and<br />to activate online payments.</p>
        <Brands><StripeCards /></Brands>
      </Partner>
      <Partner $top={19}>
        <FundMark>Fundbox<svg width="58" height="9" viewBox="0 0 58 9"><path d="M0 1l58-1-2 6-20 1-12 0-23 2z" fill="#35a9cf" /></svg></FundMark>
        <p>A business line of credit can help<br />you optimize cash flow and<br />manage expenses. <a href="#fundbox">Click here</a> to<br />contact Fundbox to learn more.</p>
      </Partner>
    </Pair>
    <Card>
      <CardHead $right={15}><h2>Payments to Verify</h2><RefreshButton /></CardHead>
      <PaymentTable />
    </Card>
    <Card>
      <CardHead $right={15}><h2>Recent Payments</h2><RefreshButton color="#3d4660" /></CardHead>
      <PaymentTable />
    </Card>
    <Card>
      <CardHead>
        <h2>Payments by Month</h2>
        <PickWrap><Pick $w={91} aria-label="Month period" defaultValue="y"><option value="y">This Year</option></Pick><ChevronDown size={11} strokeWidth={1.7} /></PickWrap>
        <RefreshButton />
      </CardHead>
      <Legend><Key $c={navy}>Payments</Key><Key $c="#49a82b">Invoices</Key></Legend>
      <MonthChart />
    </Card>
  </Cards>
);

const Desktop = () => (
  <Screen>
    <DesktopHeader />
    <Scroller>
      <Dashboard>
        <DashboardCards />
        <ListTools>
          <Collapse type="button" aria-label="Collapse">
            <svg width="13" height="9" viewBox="0 0 13 9"><path d="M6.5 0L13 8v1H0V8z" fill="#999" /></svg>
          </Collapse>
          <Segments>
            <Segment type="button" $w={88}>Received</Segment>
            <Segment type="button" $w={90}>Review</Segment>
            <Segment type="button" $w={90}>Verified</Segment>
            <Segment type="button" $w={90} $on="#eaeff6">All</Segment>
          </Segments>
        </ListTools>
        <ListTable>
          <thead>
            <tr>
              <Th $w={11.2} aria-label="Row" />
              <Th $w={20.2} $line>Customer</Th>
              <Th $w={20.1} $line>Project</Th>
              <Th $w={20.1} $line>Invoice #</Th>
              <Th $w={11.7} $end>Amount</Th>
              <Th $w={6.4}>Type</Th>
              <Th $w={10.3}>Status</Th>
            </tr>
          </thead>
        </ListTable>
      </Dashboard>
      <ScrollTrack><ScrollThumb /></ScrollTrack>
    </Scroller>
    <Dock>
      <DockLeft><WorkerIcon /><PeopleIcon /><BuildingIcon /><HomeUserIcon /></DockLeft>
      <DockSearch>
        <DockMark><Search size={15} strokeWidth={1.7} /></DockMark>
        <input aria-label="Search here" placeholder="Search here..." />
      </DockSearch>
      <DockRight><GridCalendarIcon /><AddCalendarIcon /><Bell size={17} strokeWidth={1.7} /><History size={17} strokeWidth={1.7} /></DockRight>
    </Dock>
  </Screen>
);

const Handset = () => (
  <Phone>
    <StatusBar>
      <StatusShape viewBox="0 0 386 38" preserveAspectRatio="none">
        <path d="M0 38C5 18 18 0 46 0H90q5 0 5 5C96 20 106 29 122 29H266C282 29 290 20 291 5q0-5 5-5H342C368 0 381 18 386 38z" fill="#0a5ba6" />
        <path d="M16 40H372" stroke="#3a86c4" strokeWidth="1.5" />
        <rect x="170" y="5" width="45" height="7" rx="3.5" fill="#a9a9a9" stroke="#8f8f8f" />
        <circle cx="233" cy="9" r="5" fill="#ececec" stroke="#a5a5a5" strokeWidth="2" />
      </StatusShape>
      <StatusSide>00:36<FaLocationArrow size={12} /></StatusSide>
      <StatusSide>
        <svg width="18" height="11" viewBox="0 0 18 11" fill="#0a0a14">
          <rect y="7" width="3" height="4" rx="1" /><rect x="5" y="5" width="3" height="6" rx="1" /><rect x="10" y="2.5" width="3" height="8.5" rx="1" /><rect x="15" width="3" height="11" rx="1" />
        </svg>
        <small>4G</small>
        <svg width="25" height="12" viewBox="0 0 25 12">
          <rect x=".5" y=".5" width="20" height="11" rx="3" fill="none" stroke="#17406e" />
          <rect x="2" y="2" width="15" height="8" rx="1.5" fill="#4bd06b" />
          <path d="M12 0L5 7h5l-1 5 7-7h-5z" fill="#0a0a14" />
          <path d="M22.5 4v4c1.5-.5 1.5-3.5 0-4z" fill="#17406e" />
        </svg>
      </StatusSide>
    </StatusBar>
    <Sheet>
      <Due>Payment Due: <b>$261.95</b></Due>
      <BrandBox>
        <BrandTop>
          <BuildingMark />
          <div>
            <BrandWord>CONTRACTOR</BrandWord>
            <BrandSub><span>F</span><span>O</span><span>R</span><span>E</span><span>M</span><span>A</span><span>N</span></BrandSub>
          </div>
        </BrandTop>
        <BrandFoot><span>Payments</span><Powered>powered by<b>CHASE</b><ChaseMark /></Powered></BrandFoot>
      </BrandBox>
      <PayRow><span>Pay $<b>261.95</b></span><EditButton type="button">Edit</EditButton></PayRow>
      <Field $gap={12}><Label htmlFor="name">Name</Label><TextBox id="name" defaultValue="John Smith" /></Field>
      <Field $gap={12}><Label htmlFor="email">Email</Label><TextBox id="email" defaultValue="johnsmith@gmail.com" /></Field>
      <Field $gap={3} $pad="0 4px 0 0"><Label htmlFor="phone">Phone</Label><TextBox id="phone" defaultValue="055567894" /></Field>
      <Field $gap={12} $pad="0 0 0 5px"><Label htmlFor="postal">Postal Code</Label><TextBox id="postal" defaultValue="40657" /></Field>
      <Field $gap={13}>
        <Label htmlFor="country">Country</Label>
        <CountryWrap>
          <CountryBox id="country" defaultValue="us"><option value="us">United States</option></CountryBox>
          <ChevronDown size={13} strokeWidth={1.7} />
        </CountryWrap>
      </Field>
      <Field $gap={15} $pad="0 1px"><Label htmlFor="card">Card Number</Label><CardBox id="card" placeholder="Card Number" /></Field>
      <ExpRow>
        <Expiry>
          <legend>Exp Date (MM/YY)</legend>
          <ExpParts><CardBox aria-label="Month" placeholder="MM" /><span>/</span><CardBox aria-label="Year" placeholder="YY" /></ExpParts>
        </Expiry>
        <ScanButton type="button" aria-label="Scan card">
          <svg width="26" height="18" viewBox="0 0 26 18" fill="none" stroke="#151515" strokeWidth="1.6">
            <path d="M14 14.5H3A2 2 0 0 1 1 12.5V3A2 2 0 0 1 3 1h17.5a2 2 0 0 1 2 2v6" />
            <path d="M1 4.7h21.5" strokeWidth="1.8" />
            <path d="M4 9h7" />
            <circle cx="17.5" cy="9.5" r="4" fill="#fdfdfd" />
            <path d="M15.5 9.5h4" strokeWidth="1.2" />
            <path d="M20.5 12.5l4.5 4.5" strokeWidth="2" />
          </svg>
        </ScanButton>
        <CvvField><Label htmlFor="cvv">CVV</Label><CardBox id="cvv" placeholder="CVV" /></CvvField>
      </ExpRow>
      <PayButton type="button">
        Pay Now
        <svg width="18" height="14" viewBox="0 0 18 14" fill="none" stroke="#fff" strokeWidth="1.5">
          <rect x="1" y="1" width="16" height="12" rx="1.5" />
          <path d="M1 4.7h16" strokeWidth="1.8" />
          <path d="M3.5 9.7H6M7.5 9.7h4" />
        </svg>
      </PayButton>
      <Accepted>
        <Badge>
          <svg width="37" height="24" viewBox="0 0 37 24">
            <circle cx="25" cy="12" r="11" fill="#f7c945" />
            <circle cx="12" cy="12" r="11" fill="#e8331f" />
            <path d="M18.5 3.1a11 11 0 0 1 0 17.8 11 11 0 0 1 0-17.8z" fill="#f26a30" />
          </svg>
        </Badge>
        <Badge $c="#1a1a8c"><VisaText>VISA</VisaText></Badge>
        <Badge><DiscoverText>DISC<i />VER</DiscoverText></Badge>
        <Badge $bg="#3275c4" $c="#fff"><AmexText>AMEX</AmexText></Badge>
      </Accepted>
    </Sheet>
  </Phone>
);

export default function App() {
  return (
    <>
      <GlobalStyle />
      <Stage>
        <Laptop>
          <Lid><Desktop /><Chin /></Lid>
          <Base><Notch /></Base>
        </Laptop>
        <Handset />
      </Stage>
    </>
  );
}
